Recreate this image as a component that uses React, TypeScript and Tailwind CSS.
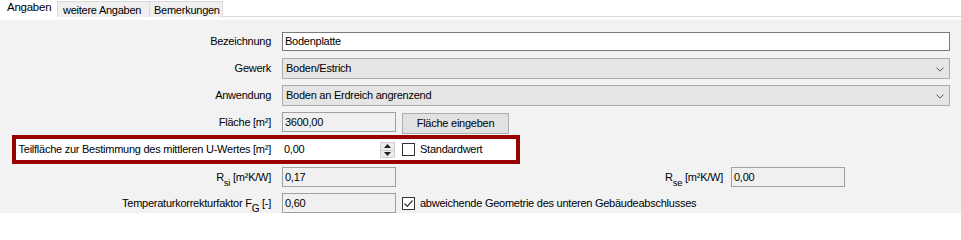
import React from "react";

const font = { fontFamily: '"Liberation Sans", Arial, sans-serif' };

function Chevron() {
  return (
    <svg width="8" height="5" viewBox="0 0 8 5" className="absolute right-[5px] top-[8px]">
      <path d="M0.5 0.6 L4 4.1 L7.5 0.6" fill="none" stroke="#555555" strokeWidth="1" />
    </svg>
  );
}

function Label({ children }: { children: React.ReactNode }) {
  return <div className="w-[272px] shrink-0 text-right pr-[1px] whitespace-nowrap">{children}</div>;
}

export default function App() {
  return (
    <div className="w-[961px] h-[213px] bg-white overflow-hidden text-[11px] leading-[13px] tracking-[-0.25px] text-black" style={font}>
      {/* tabs */}
      <div className="flex h-[17px] items-end">
        <div className="w-[57px] h-[17px] bg-white pl-[7px] pt-[1px] text-[11.5px]">Angaben</div>
        <div className="flex flex-1 h-[16px] border-b border-[#d9d9d9]">
          <div className="w-[93px] h-[16px] bg-[#f0f0f0] border border-b-0 border-[#d9d9d9] pl-[5px] pt-[2px]">weitere Angaben</div>
          <div className="w-[73px] h-[16px] bg-[#f0f0f0] border border-l-0 border-b-0 border-[#d9d9d9] pl-[4px] pt-[2px]">Bemerkungen</div>
        </div>
      </div>
      <div className="h-[3px] bg-white" />
      {/* panel */}
      <div className="bg-[#f2f2f2] h-[193px] pt-[12px] flex flex-col">
        <div className="flex items-center h-[19px]">
          <Label>Bezeichnung</Label>
          <div className="ml-[10px] w-[668px] h-[19px] bg-white border border-[#7a7a7a] px-[2px] flex items-center">Bodenplatte</div>
        </div>
        <div className="flex items-center h-[21px] mt-[7px]">
          <Label>Gewerk</Label>
          <div className="relative ml-[10px] w-[668px] h-[21px] bg-[#e5e5e5] border border-[#acacac] px-[3px] flex items-center">
            Boden/Estrich
            <Chevron />
          </div>
        </div>
        <div className="flex items-center h-[21px] mt-[6px]">
          <Label>Anwendung</Label>
          <div className="relative ml-[10px] w-[668px] h-[21px] bg-[#e5e5e5] border border-[#acacac] px-[3px] flex items-center">
            Boden an Erdreich angrenzend
            <Chevron />
          </div>
        </div>
        <div className="flex items-start h-[23px] mt-[6px]">
          <Label><span className="block pt-[4px]">Fläche [m²]</span></Label>
          <div className="ml-[10px] w-[114px] h-[20px] bg-[#f0f0f0] border border-[#a0a0a0] px-[2px] flex items-center">3600,00</div>
          <div className="ml-[6px] mt-[1px] w-[107px] h-[21px] bg-[#e1e1e1] border border-[#adadad] flex items-center justify-center">Fläche eingeben</div>
        </div>
        <div className="ml-[12px] w-[508px] h-[29px] border-4 border-[#990000] bg-white flex items-center">
          <div className="w-[256px] shrink-0 text-right pr-[1px] whitespace-nowrap">Teilfläche zur Bestimmung des mittleren U-Wertes [m²]</div>
          <div className="relative ml-[10px] w-[114px] h-[21px] bg-white flex items-center px-[2px]">
            0,00
            <div className="absolute right-[1px] top-[3px] w-[15px] h-[16px] flex flex-col border border-[#d0d0d0] bg-[#ececec]">
              <div className="flex-1 flex items-center justify-center border-b border-[#d0d0d0]">
                <svg width="7" height="4" viewBox="0 0 7 4"><path d="M3.5 0 L7 4 L0 4 Z" fill="#202020" /></svg>
              </div>
              <div className="flex-1 flex items-center justify-center">
                <svg width="7" height="4" viewBox="0 0 7 4"><path d="M0 0 L7 0 L3.5 4 Z" fill="#202020" /></svg>
              </div>
            </div>
          </div>
          <div className="ml-[6px] w-[13px] h-[13px] border border-[#333333] bg-white" />
          <div className="ml-[5px]">Standardwert</div>
        </div>
        <div className="flex items-center h-[20px] mt-[3px]">
          <Label>R<sub className="text-[9.5px] align-[-3px]">si</sub> [m²K/W]</Label>
          <div className="ml-[10px] w-[114px] h-[20px] bg-[#f0f0f0] border border-[#a0a0a0] px-[2px] flex items-center">0,17</div>
          <div className="ml-[265px] w-[62px] text-right whitespace-nowrap">R<sub className="text-[9.5px] align-[-3px]">se</sub> [m²K/W]</div>
          <div className="ml-[8px] w-[114px] h-[20px] bg-[#f0f0f0] border border-[#a0a0a0] px-[2px] flex items-center">0,00</div>
        </div>
        <div className="flex items-center h-[20px] mt-[6px]">
          <Label>Temperaturkorrekturfaktor F<sub className="text-[10px] align-[-3px]">G</sub> [-]</Label>
          <div className="ml-[10px] w-[114px] h-[20px] bg-[#f0f0f0] border border-[#a0a0a0] px-[2px] flex items-center">0,60</div>
          <div className="ml-[6px] w-[13px] h-[13px] border border-[#333333] bg-white flex items-center justify-center">
            <svg width="11" height="11" viewBox="0 0 11 11"><path d="M1.5 5.5 L4.3 8.3 L9.5 2.5" fill="none" stroke="#333" strokeWidth="1.2" /></svg>
          </div>
          <div className="ml-[5px] whitespace-nowrap">abweichende Geometrie des unteren Gebäudeabschlusses</div>
        </div>
      </div>
    </div>
  );
}
